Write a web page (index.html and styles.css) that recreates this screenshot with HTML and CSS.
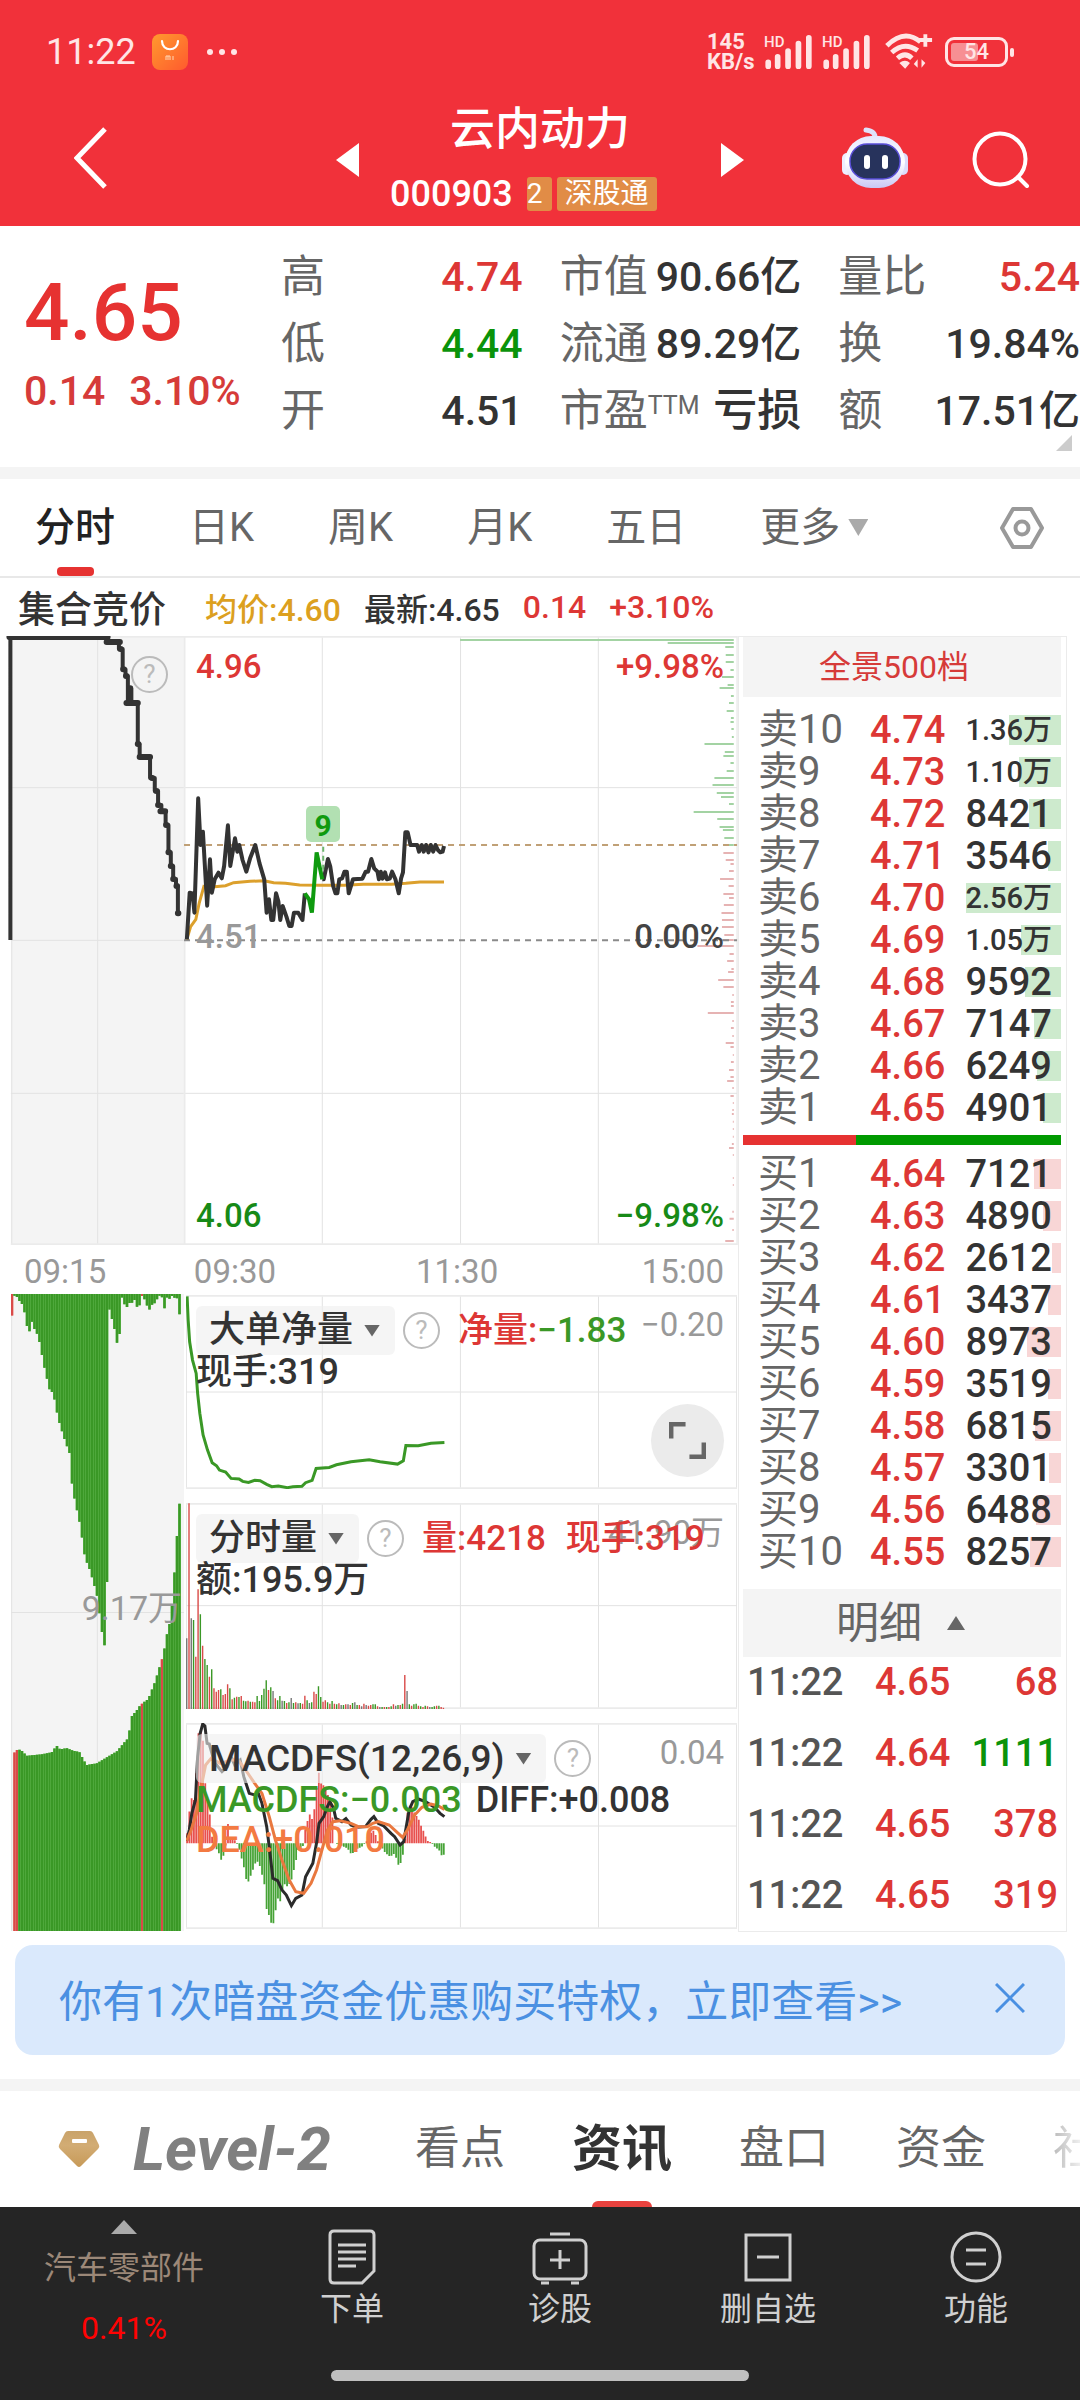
FILE: index.html
```html
<!DOCTYPE html>
<html lang="zh-CN">
<head>
<meta charset="utf-8">
<meta name="viewport" content="width=device-width, initial-scale=1">
<title>云内动力 000903</title>
<link rel="stylesheet" href="styles.css">
</head>
<body>
<header class="top">
  <div class="status">
    <span class="clock">11:22</span>
    <svg class="mi" viewBox="0 0 36 36"><defs><linearGradient id="mi" x1="0" y1="0" x2="1" y2="1"><stop offset="0" stop-color="#ff9a2e"/><stop offset="1" stop-color="#ff5a2e"/></linearGradient></defs><rect width="36" height="36" rx="8" fill="url(#mi)"/><path d="M10 7c0 11 16 11 16 0" fill="none" stroke="#fff" stroke-width="2.2" stroke-linecap="round"/><path d="M14 26v-4h4v4m-2-4v4m5-4v4" fill="none" stroke="#ffd9b8" stroke-width="1"/></svg>
    <svg class="dots" viewBox="0 0 32 8"><circle cx="4" cy="4" r="3"/><circle cx="16" cy="4" r="3"/><circle cx="28" cy="4" r="3"/></svg>
    <span class="speed">145<br>KB/s</span>
    <span class="sim"><span>HD</span><svg viewBox="0 0 52 36"><path d="M4 29v4M14 23v10M25 17v16M36 9v24M47 3v30"/></svg></span>
    <span class="sim"><span>HD</span><svg viewBox="0 0 52 36"><path d="M4 29v4M14 23v10M25 17v16M36 9v24M47 3v30"/></svg></span>
    <svg class="wifi" viewBox="0 0 52 38"><path d="M3 13Q21-5 38 9M8 20Q21 8 35 18M14 26q8-7 15 0" fill="none" stroke-width="5"/><path d="M43 1v13M36 7h14" fill="none" stroke-width="4"/><path d="M16 31q6-5 11 0l-5 6zM35 27v9l-4-4zM39 36v-9l4 4z" stroke="none" fill="#ffe5e5"/></svg>
    <span class="battery"><i></i><b>54</b></span>
  </div>
  <nav class="nav">
    <button class="back" aria-label="返回"><svg viewBox="0 0 34 62"><path d="M31 2 3 31l28 29"/></svg></button>
    <div class="switch">
      <button class="arrow prev" aria-label="上一只"></button>
      <div class="stock">
        <h1>云内动力</h1>
        <p><span class="code">000903</span><span class="tag cut">2</span><span class="tag">深股通</span></p>
      </div>
      <button class="arrow next" aria-label="下一只"></button>
    </div>
    <div class="tools">
      <button aria-label="智能助手"><svg class="robot" viewBox="0 0 68 64"><defs><linearGradient id="rb" x1="0" y1="0" x2="0" y2="1"><stop offset="0" stop-color="#e6e9ff"/><stop offset=".5" stop-color="#fff"/><stop offset="1" stop-color="#c9c8f4"/></linearGradient></defs><path d="M34 12q1-8-9-9" fill="none" stroke="#dfe2fb" stroke-width="5" stroke-linecap="round"/><rect x="1" y="26" width="10" height="22" rx="5" fill="#eef"/><rect x="57" y="26" width="10" height="22" rx="5" fill="#dcdcfa"/><rect x="4" y="9" width="60" height="52" rx="26" fill="url(#rb)"/><rect x="9" y="17" width="50" height="35" rx="17" fill="#27335c" stroke="#5a4fd8" stroke-width="1.5"/><rect x="23" y="28" width="6" height="14" rx="3" fill="#fff"/><rect x="41" y="28" width="6" height="14" rx="3" fill="#fff"/></svg></button>
      <button aria-label="搜索"><svg class="search" viewBox="0 0 58 58"><circle cx="28" cy="28" r="25.5"/><path d="m46 46 9 9"/></svg></button>
    </div>
  </nav>
</header>

<main>
<section class="quote">
  <div class="last">
    <strong>4.65</strong>
    <p><span>0.14</span><span>3.10%</span></p>
  </div>
  <dl class="stats">
    <div><dt>高</dt><dd class="up">4.74</dd></div>
    <div><dt>市值</dt><dd>90.66亿</dd></div>
    <div><dt>量比</dt><dd class="up">5.24</dd></div>
    <div><dt>低</dt><dd class="down">4.44</dd></div>
    <div><dt>流通</dt><dd>89.29亿</dd></div>
    <div><dt>换</dt><dd>19.84%</dd></div>
    <div><dt>开</dt><dd>4.51</dd></div>
    <div><dt>市盈<sup>TTM</sup></dt><dd class="word">亏损</dd></div>
    <div><dt>额</dt><dd>17.51亿</dd></div>
  </dl>
  <i class="corner"></i>
</section>

<nav class="periods">
  <button class="on">分时</button><button>日K</button><button>周K</button><button>月K</button><button>五日</button><button class="more">更多</button>
  <button class="gear" aria-label="设置"><svg viewBox="0 0 44 42"><path d="M13 2h18L42 21 31 40H13L2 21z" stroke-linejoin="round"/><circle cx="22" cy="21" r="6.5"/></svg></button>
</nav>

<div class="summary">
  <strong>集合竞价</strong><span class="avg">均价:4.60</span><span>最新:4.65</span><span class="up">0.14</span><span class="up">+3.10%</span>
</div>

<div class="board">
  <section class="charts">
    <div class="price">
      <svg viewBox="0 48 1564 1827" preserveAspectRatio="none">
        <rect x="23" y="48" width="366" height="1827" fill="#f4f4f4"/>
        <path class="grid" d="M23 48H1562M23 503H1562M23 961H390M23 1420H1562M207 48V1875M683 48V1875M976 48V1875M1268 48V1875M25 48V1875M1562 48V1875"/>
        <path class="grid thick" d="M23 50H1562M391 48V1875M23 1873H1562"/>
        <g id="depth"></g>
        <path d="M390 675H1562" stroke="#c0a076" stroke-width="2" stroke-dasharray="6 5"/>
        <path d="M390 961H1562" stroke="#8a8a8a" stroke-width="2" stroke-dasharray="6 5"/>
        <path class="ink" d="M22 960V51H228V66H252V87H260V148H266V168H271V248H276V205H278V248H292V372H296V410H318V474H328V513H335V555H342V573H351V615H357V697H362V738H367V777H373V798H377V880"/>
        <path class="ink heavy" d="M20 51H228M226 66h28M276 205v43M268 249h24M296 411h22M340 574h10M255 87h1M261 148h1M267 168h1M292 372h1M322 474h1M331 513h1M335 555h1M352 615h1M357 697h1M362 738h1M367 777h1M374 798h1M377 880h1"/>
        <polyline class="avgline" points="396,958 404,920 415,898 422,850 432,800 440,805 455,800 478,797 495,788 530,784 560,782 580,788 605,790 635,795 680,796 730,796 770,793 830,793 860,790 890,786 941,786"/>
        <polyline class="ink" points="396,958 402,818 408,820 412,878 420,535 425,675 430,635 439,857 445,718 449,818 455,778 463,758 470,775 475,738 483,616 488,738 498,655 503,695 507,675 514,720 522,755 530,715 541,675 550,730 560,778 565,878 570,838 575,900 579,900 585,820 590,845 594,900 599,858 607,890 613,918 618,918 623,878 632,878 641,900 646,820"/>
        <polyline class="ink" points="683,778 686,778 695,717 700,740 706,798 711,820 715,820 719,778 725,775 730,755 735,755 739,820 748,778 768,776 775,755 780,755 787,717 793,745 800,755 803,778 807,755 811,776 816,757 820,778 826,776 831,755 838,778 845,820 850,775 854,757 859,637 864,637 870,675 884,675 888,695 894,675 898,695 903,675 908,697 913,675 918,695 923,675 928,690 933,697 938,695 941,678"/>
        <polyline points="646,820 655,838 661,878 671,697 683,778" fill="none" stroke="#0f9a0f" stroke-width="4"/>
        <path d="M685 680V752" stroke="#6db56d" stroke-width="2" stroke-dasharray="5 4"/>
      </svg>
      <button class="help auction" aria-label="说明">?</button>
      <span class="nine">9</span>
      <span class="lab l t up">4.96</span><span class="lab r t up">+9.98%</span>
      <span class="lab l m mute">4.51</span><span class="lab r m">0.00%</span>
      <span class="lab l b down">4.06</span><span class="lab r b down">−9.98%</span>
    </div>
    <div class="axis"><span>09:15</span><span>09:30</span><span>11:30</span><span>15:00</span></div>
    <div class="subs">
      <div class="pre">
        <svg viewBox="33 34 519 1512" preserveAspectRatio="none">
          <path class="grid" d="M33 790H552M292 34V1546M35 34V1546"/>
          <g id="pre-net"></g><g id="pre-vol"></g>
        </svg>
        <span>9.17万</span>
      </div>
      <div class="stack">
        <div class="sub net">
          <svg viewBox="16 44 1516 584" preserveAspectRatio="none">
            <path class="grid" d="M16 336H1532M391 44V628M771 44V628M1151 44V628M17 44V628M1531 44V628"/>
            <path class="grid thick" d="M16 46H1532M16 626H1532"/>
            <polyline fill="none" stroke="#3a9826" stroke-width="3" points="19,48 22,120 26,185 34,240 44,280 48,340 54,400 63,465 75,510 88,549 100,558 108,571 125,577 140,596 162,598 172,605 188,608 205,602 220,603 238,614 252,621 270,619 295,624 310,621 335,620 345,609 363,602 374,566 410,563 430,555 470,546 520,540 550,546 598,553 614,543 621,497 655,498 690,490 727,488"/>
          </svg>
          <div class="legend">
            <button class="chip">大单净量</button><button class="help" aria-label="说明">?</button>
            <span><b class="up">净量:</b><b class="green">−1.83</b></span>
          </div>
          <div class="second"><span>现手:319</span></div>
          <span class="edge">−0.20</span>
          <button class="expand" aria-label="全屏"><svg viewBox="0 0 38 38"><path d="M2 17V2h15M36 21v15H21"/></svg></button>
        </div>
        <div class="sub">
          <svg viewBox="16 -291 1516 618" preserveAspectRatio="none">
            <path class="grid" d="M16 17H1532M391 -291V327M771 -291V327M1151 -291V327M17 -291V327M1531 -291V327"/>
            <path class="grid thick" d="M16 -289H1532M16 325H1532"/>
            <g id="volume"></g>
          </svg>
          <span class="edge">41.90万</span>
          <div class="legend">
            <button class="chip">分时量</button><button class="help" aria-label="说明">?</button>
            <span class="up">量:4218</span><span class="up">现手:319</span>
          </div>
          <div class="second"><span>额:195.9万</span></div>
        </div>
        <div class="sub">
          <svg viewBox="16 369 1516 618" preserveAspectRatio="none">
            <path class="grid" d="M16 678H1532M391 369V987M771 369V987M1151 369V987M17 369V987M1531 369V987"/>
            <path class="grid thick" d="M16 371H1532M16 985H1532"/>
            <g id="macd"></g>
            <polyline fill="none" stroke="#2b2b2b" stroke-width="3" points="18,722 25,690 32,640 42,600 48,470 55,400 62,372 68,378 74,430 80,432 90,470 100,495 115,515 130,500 140,470 150,495 165,480 175,530 190,580 205,585 215,580 225,610 238,680 245,740 255,835 268,842 280,870 292,885 306,917 318,895 335,885 345,830 365,790 375,730 382,670 395,650 405,620 412,605 422,625 428,655 445,665 456,656 470,675 485,682 510,680 525,658 533,650 545,670 560,678 580,700 590,710 605,735 615,725 622,680 630,630 640,605 655,597 675,605 700,622 715,640 727,650"/>
            <polyline fill="none" stroke="#e9783f" stroke-width="3" points="18,722 30,690 45,640 58,560 70,495 85,475 110,490 140,480 160,480 180,510 205,550 225,580 245,650 262,720 280,780 300,840 318,875 340,880 360,850 375,810 390,750 405,690 420,665 440,662 470,670 490,680 515,680 530,670 545,665 575,675 600,700 612,712 625,690 645,645 665,622 690,612 710,618 727,628"/>
          </svg>
          <div class="legend">
            <button class="chip latin">MACDFS(12,26,9)</button><button class="help" aria-label="说明">?</button>
          </div>
          <div class="second"><span class="green">MACDFS:−0.003</span><span>DIFF:+0.008</span><span class="orange">DEA:+0.010</span></div>
          <span class="edge">0.04</span>
        </div>
      </div>
    </div>
  </section>

  <aside class="book">
    <button class="depth-link">全景500档</button>
    <table class="levels sell">
      <tr><th>卖10</th><td>4.74</td><td class="small" style="--w:52px">1.36万</td></tr>
      <tr><th>卖9</th><td>4.73</td><td class="small" style="--w:42px">1.10万</td></tr>
      <tr><th>卖8</th><td>4.72</td><td style="--w:32px">8421</td></tr>
      <tr><th>卖7</th><td>4.71</td><td style="--w:13px">3546</td></tr>
      <tr><th>卖6</th><td>4.70</td><td class="small" style="--w:98px">2.56万</td></tr>
      <tr><th>卖5</th><td>4.69</td><td class="small" style="--w:40px">1.05万</td></tr>
      <tr><th>卖4</th><td>4.68</td><td style="--w:36px">9592</td></tr>
      <tr><th>卖3</th><td>4.67</td><td style="--w:27px">7147</td></tr>
      <tr><th>卖2</th><td>4.66</td><td style="--w:24px">6249</td></tr>
      <tr><th>卖1</th><td>4.65</td><td style="--w:18px">4901</td></tr>
    </table>
    <div class="ratio"><i style="width:35.5%"></i></div>
    <table class="levels buy">
      <tr><th>买1</th><td>4.64</td><td style="--w:27px">7121</td></tr>
      <tr><th>买2</th><td>4.63</td><td style="--w:18px">4890</td></tr>
      <tr><th>买3</th><td>4.62</td><td style="--w:9px">2612</td></tr>
      <tr><th>买4</th><td>4.61</td><td style="--w:13px">3437</td></tr>
      <tr><th>买5</th><td>4.60</td><td style="--w:34px">8973</td></tr>
      <tr><th>买6</th><td>4.59</td><td style="--w:13px">3519</td></tr>
      <tr><th>买7</th><td>4.58</td><td style="--w:26px">6815</td></tr>
      <tr><th>买8</th><td>4.57</td><td style="--w:12px">3301</td></tr>
      <tr><th>买9</th><td>4.56</td><td style="--w:25px">6488</td></tr>
      <tr><th>买10</th><td>4.55</td><td style="--w:31px">8257</td></tr>
    </table>
    <button class="detail">明细</button>
    <table class="ticks">
      <tr><td>11:22</td><td class="up">4.65</td><td class="up">68</td></tr>
      <tr><td>11:22</td><td class="up">4.64</td><td class="down">1111</td></tr>
      <tr><td>11:22</td><td class="up">4.65</td><td class="up">378</td></tr>
      <tr><td>11:22</td><td class="up">4.65</td><td class="up">319</td></tr>
    </table>
  </aside>
</div>

<div class="banner">
  <a href="#">你有1次暗盘资金优惠购买特权，立即查看&gt;&gt;</a>
  <button aria-label="关闭"><svg viewBox="0 0 30 30"><path d="m1 1 28 28M29 1 1 29"/></svg></button>
</div>

<nav class="sections">
  <svg class="gem" viewBox="0 0 42 38"><defs><linearGradient id="gm" x1="0" y1="0" x2="0" y2="1"><stop offset="0" stop-color="#c9a36a"/><stop offset=".4" stop-color="#d2ac74"/><stop offset="1" stop-color="#c79a58"/></linearGradient></defs><path d="M10 1h22q2 0 3 2l6 12q1 2-1 4L23 36q-2 2-4 0L2 19q-2-2-1-4L7 3q1-2 3-2z" fill="url(#gm)"/><rect x="14" y="9" width="15" height="4" rx="1" fill="#fff"/></svg>
  <a class="level" href="#">Level-2</a>
  <a href="#">看点</a><a class="on" href="#">资讯</a><a href="#">盘口</a><a href="#">资金</a><a class="fade" href="#">社</a>
</nav>
</main>

<footer class="dock">
  <div class="bar">
    <button class="industry"><i></i><span>汽车零部件</span><em>0.41%</em></button>
    <button><svg viewBox="0 0 56 56"><path d="M10 2h36q4 0 4 4v36L38 54H10q-4 0-4-4V6q0-4 4-4z"/><path d="M14 16h28M14 23h28M14 30h28M14 37h18"/></svg>下单</button>
    <button><svg viewBox="0 0 56 56"><rect x="2" y="11" width="52" height="39" rx="6"/><path d="M18 5h20M9 54h8M39 54h8M28 21v19M18 31h20"/></svg>诊股</button>
    <button><svg viewBox="0 0 56 56"><rect x="6" y="6" width="44" height="45"/><path d="M17 28h22"/></svg>删自选</button>
    <button><svg viewBox="0 0 56 56"><circle cx="28" cy="28" r="24"/><path d="M18 21h20M18 35h20"/></svg>功能</button>
  </div>
  <i class="home"></i>
</footer>
<script src="charts.js"></script>
</body>
</html>
```

FILE: styles.css
```css
* { box-sizing: border-box; margin: 0; padding: 0; }
body {
  background: #fff;
  color: #333;
  font-family: Roboto, "Noto Sans CJK SC", sans-serif;
  font-weight: 500;
}
button { border: 0; background: none; font: inherit; color: inherit; }
a { color: inherit; text-decoration: none; }
i, em { font-style: normal; }
svg { display: block; }
.up { color: #dd3735; }
.down { color: #0a930a; }
.green { color: #3a9826; }
.orange { color: #f37a42; }

/* header */
.top { background: #f1313a; color: #fff; }
.status { display: flex; align-items: center; height: 103px; padding: 0 62px 0 46px; color: #ffe5e5; }
.clock { font-size: 36px; font-weight: 400; line-height: 40px; }
.mi { width: 36px; height: 36px; margin-left: 16px; }
.dots { width: 32px; height: 8px; margin-left: 18px; fill: #ffe5e5; }
.speed { margin-left: auto; width: 52px; font-size: 22px; font-weight: 700; line-height: 20px; }
.sim { position: relative; margin-left: 5px; }
.sim + .sim { margin-left: 8px; }
.sim span { position: absolute; left: 0; top: 0; font-size: 15px; line-height: 14px; }
.sim svg { width: 50px; height: 34px; }
.sim path { stroke: #ffe5e5; stroke-width: 6; stroke-linecap: round; fill: none; }
.wifi { width: 50px; height: 37px; margin-left: 12px; stroke: #ffe5e5; }
.battery { position: relative; width: 63px; height: 30px; margin-left: 11px; margin-right: 10px; border: 3px solid #ffe5e5; border-radius: 9px; text-align: center; }
.battery i { position: absolute; left: 3px; top: 3px; bottom: 3px; width: 27px; background: #f78f93; border-radius: 3px; }
.battery::after { content: ""; position: absolute; right: -9px; top: 8px; width: 4px; height: 9px; background: #ffe5e5; border-radius: 2px; }
.battery b { position: relative; font-size: 22px; font-weight: 500; line-height: 24px; display: block; }
.nav { display: grid; grid-template-columns: 1fr 408px 1fr; height: 123px; }
.back { justify-self: start; align-self: start; margin: 24px 0 0 74px; }
.back svg { width: 34px; height: 62px; fill: none; stroke: #fff; stroke-width: 5; }
.switch { display: flex; justify-content: space-between; align-items: start; }
.arrow { width: 23px; height: 34px; margin-top: 40px; background: #fff; }
.prev { clip-path: polygon(100% 0, 100% 100%, 0 50%); }
.next { clip-path: polygon(0 0, 100% 50%, 0 100%); }
.stock { width: 300px; text-align: center; }
.stock h1 { font-size: 45px; font-weight: 500; line-height: 54px; }
.stock p { display: flex; align-items: center; height: 74px; gap: 5px; }
.code { font-size: 36px; margin-right: 9px; }
.tag { height: 34px; padding: 0 8px; border-radius: 3px; background: #e18c46; font-size: 28px; font-weight: 400; line-height: 34px; }
.tag.cut { padding: 0 9px 0 0; }
.tools { display: flex; justify-content: flex-end; align-items: start; gap: 63px; padding: 24px 50px 0 0; }
.robot { width: 68px; height: 64px; }
.search { width: 58px; height: 58px; margin-top: 4px; fill: none; stroke: #fff; stroke-width: 4; stroke-linecap: round; }

/* quote */
.quote { position: relative; display: grid; grid-template-columns: 257fr 799fr; height: 253px; padding: 18px 0 0 24px; border-bottom: 12px solid #f4f4f4; }
.last { color: #e63231; }
.last strong { display: block; margin-top: 19px; font-size: 80px; font-weight: 500; line-height: 100px; }
.last p { display: flex; gap: 24px; font-size: 41px; line-height: 56px; color: #d63b39; }
.stats { display: grid; grid-template-columns: 1fr 1fr 1fr; grid-auto-rows: 67px; column-gap: 37px; }
.stats div { display: flex; justify-content: space-between; line-height: 67px; white-space: nowrap; }
.stats dt { font-size: 44px; font-weight: 400; color: #666; }
.stats dd { font-size: 41px; }
.stats .word { font-size: 44px; }
.stats sup { font-size: 25px; line-height: 20px; vertical-align: 12px; }
.corner { position: absolute; right: 8px; bottom: 16px; width: 16px; height: 16px; background: #ccc; clip-path: polygon(100% 0, 100% 100%, 0 100%); }

/* period tabs */
.periods { display: flex; align-items: center; gap: 74px; height: 99px; padding: 0 36px 0 35px; border-bottom: 2px solid #e8e8e8; font-size: 40px; font-weight: 400; line-height: 97px; color: #666; }
.periods button { white-space: nowrap; }
.periods .on { position: relative; font-weight: 500; color: #222; }
.periods .on::after { content: ""; position: absolute; left: 22px; bottom: 0; width: 37px; height: 9px; border-radius: 4px; background: #e63231; }
.more { display: flex; align-items: center; gap: 8px; }
.more::after { content: ""; width: 20px; height: 17px; background: #aaa; clip-path: polygon(0 0, 100% 0, 50% 100%); }
.gear { margin-left: auto; }
.gear svg { width: 44px; height: 42px; fill: none; stroke: #999; stroke-width: 4; }

.summary { display: flex; align-items: center; gap: 23px; height: 58px; padding-left: 18px; font-size: 32px; }
.summary strong { margin-right: 16px; font-size: 37px; font-weight: 500; }
.avg { color: #dca01f; }

/* chart board */
.board { display: grid; grid-template-columns: 738fr 329fr; padding-right: 13px; }
.charts svg { width: 100%; height: 100%; }
.charts svg * { vector-effect: non-scaling-stroke; }
.grid { fill: none; stroke: #e2e2e2; stroke-width: 1; }
.grid.thick { stroke: #ebebeb; stroke-width: 2; }
.ink { fill: none; stroke: #333; stroke-width: 4; stroke-linejoin: round; }
.ink.heavy { stroke-width: 6; stroke-linecap: round; }
.avgline { fill: none; stroke: #dca02c; stroke-width: 3; }
.price { position: relative; height: 609px; }
.lab { position: absolute; font-size: 33px; line-height: 36px; color: #444; }
.lab.up { color: #dd3735; }
.lab.down { color: #178a17; }
.lab.mute { color: #999; }
.l { left: 196px; }
.r { right: 14px; }
.t { top: 13px; }
.m { top: 283px; }
.b { bottom: 11px; }
.help { flex: none; width: 37px; height: 37px; border: 2px solid #bbb; border-radius: 50%; font-size: 26px; line-height: 33px; color: #bbb; font-weight: 400; }
.auction { position: absolute; left: 131px; top: 20px; }
.nine { position: absolute; left: 306px; top: 170px; width: 34px; height: 36px; border-radius: 5px; background: #b2e0b2; color: #0f9a0f; font-size: 30px; font-weight: 700; line-height: 40px; text-align: center; }
.axis { display: grid; grid-template-columns: 173fr 137fr 173fr 230fr; height: 49px; padding: 0 14px 0 24px; font-size: 33px; line-height: 54px; font-weight: 400; color: #999; }
.axis span:nth-child(n+3) { text-align: right; }
.subs { display: grid; grid-template-columns: 173fr 551fr; gap: 2px; padding: 0 1px 0 11px; height: 637px; }
.pre { position: relative; height: 637px; background: #f4f4f4; }
.pre span { position: absolute; right: 2px; top: 292px; font-size: 34px; line-height: 44px; font-weight: 400; color: #999; }
.stack { display: flex; flex-direction: column; gap: 14px; padding-top: 1px; }
.sub { position: relative; height: 206px; }
.sub.net { height: 194px; }
.legend { position: absolute; left: 10px; top: 11px; right: 0; display: flex; align-items: center; height: 49px; font-size: 36px; line-height: 46px; }
.legend span { margin-left: 18px; font-size: 35px; white-space: nowrap; }
.legend span + span { margin-left: 20px; }
.legend b { font-weight: 500; }
.chip { display: flex; align-items: center; gap: 11px; height: 49px; margin-right: 8px; padding: 0 15px 0 13px; border-radius: 6px; background: rgb(238 238 238 / 60%); line-height: 49px; }
.chip::after { content: ""; width: 16px; height: 12px; background: #666; clip-path: polygon(0 0, 100% 0, 50% 100%); }
.chip.latin { font-size: 37px; }
.second { position: absolute; left: 10px; top: 57px; right: 40px; display: flex; flex-wrap: wrap; column-gap: 14px; font-size: 36px; line-height: 40px; }
.edge { position: absolute; right: 13px; top: 12px; font-size: 33px; line-height: 36px; font-weight: 400; color: #999; }
.expand { position: absolute; right: 13px; bottom: 12px; width: 73px; height: 73px; padding: 18px; border-radius: 50%; background: #ebebeb; }
.expand path { fill: none; stroke: #666; stroke-width: 5; }

/* order book */
.book { display: flex; flex-direction: column; padding: 0 5px 0 4px; border: 1px solid #ebebeb; }
.depth-link { height: 60px; background: #f4f4f4; color: #d63b39; font-size: 32px; font-weight: 400; line-height: 60px; padding-right: 16px; }
.levels { width: 100%; margin-top: 12px; border-collapse: collapse; table-layout: fixed; line-height: 42px; }
.levels tr { height: 42px; }
.levels th, .levels td { height: 42px; padding: 0; white-space: nowrap; text-align: left; }
.levels th { width: 127px; padding-left: 15px; font-size: 40px; font-weight: 400; color: #666; }
.levels td { font-size: 38px; color: #dd3735; }
.levels td:last-child { padding-right: 15px; text-align: right; color: #333; background: linear-gradient(var(--bar), var(--bar)) right center / var(--w) 30px no-repeat; }
.levels td.small { font-size: 29px; }
.sell { --bar: #cdeacd; }
.buy { --bar: #f8d6d6; margin-top: 8px; }
.ratio { display: flex; height: 10px; margin-top: 6px; background: #009a00; }
.ratio i { background: #e63231; }
.detail { display: flex; align-items: center; justify-content: center; gap: 25px; height: 68px; margin-top: 16px; padding-right: 3px; background: #f4f4f4; font-size: 43px; font-weight: 400; line-height: 64px; color: #666; }
.detail::after { content: ""; width: 18px; height: 14px; background: #666; clip-path: polygon(50% 0, 100% 100%, 0 100%); }
.ticks { width: 100%; border-collapse: collapse; table-layout: fixed; font-size: 38px; line-height: 50px; }
.ticks td { padding: 0 0 21px; }
.ticks tr:last-child td { padding-bottom: 11px; }
.ticks td:first-child { width: 132px; padding-left: 4px; color: #555; }
.ticks td:last-child { text-align: right; padding-right: 3px; }

/* banner */
.banner { display: flex; align-items: center; justify-content: space-between; height: 110px; margin: 13px 15px 24px; padding: 0 40px 4px 44px; border-radius: 18px; background: #dae9fc; color: #4a90e2; font-size: 43px; font-weight: 400; }
.banner svg { width: 30px; height: 30px; stroke: #4a90e2; stroke-width: 3; }

/* section tabs */
.sections { display: flex; align-items: center; gap: 67px; height: 128px; padding-left: 58px; border-top: 12px solid #f4f4f4; overflow: hidden; font-size: 45px; font-weight: 400; line-height: 116px; white-space: nowrap; color: #666; }
.gem { flex: none; width: 42px; height: 38px; margin-right: -34px; }
.level { flex: none; width: 207px; margin-right: 8px; font-size: 61px; font-style: italic; font-weight: 700; color: #808080; }
.sections .on { position: relative; font-size: 50px; font-weight: 700; color: #333; }
.sections .on::after { content: ""; position: absolute; left: 20px; bottom: 0; width: 60px; height: 6px; border-radius: 6px 6px 0 0; background: #e8423e; }
.fade { background: linear-gradient(90deg, #bbb, #fff 36px); background-clip: text; color: transparent; }

/* dock */
.dock { height: 193px; background: #252525; color: #d0d0d0; }
.bar { display: grid; grid-template-columns: 248fr 208fr 208fr 208fr 208fr; height: 163px; }
.bar button { display: flex; flex-direction: column; align-items: center; padding-top: 22px; font-size: 32px; font-weight: 400; line-height: 48px; }
.bar svg { width: 56px; height: 56px; fill: none; stroke: #d0d0d0; stroke-width: 3; }
.bar .industry { padding-top: 13px; color: #9c8878; }
.industry i { width: 26px; height: 14px; background: #aaa; clip-path: polygon(50% 0, 100% 100%, 0 100%); }
.industry span { margin-top: 10px; }
.industry em { margin-top: 12px; color: #fe0303; }
.home { display: block; width: 418px; max-width: 60%; height: 11px; margin: 0 auto; border-radius: 6px; background: #bfbfbf; }
```

FILE: charts.js
```js
const NS = "http://www.w3.org/2000/svg";
const GREEN = "#3a9826", RED = "#d94a48", GREY = "#777";

// draws one coloured path per colour from a list of segments
function strokes(id, segments, width) {
  const byColour = {};
  segments.forEach(([colour, d]) => { byColour[colour] = (byColour[colour] || "") + d; });
  const host = document.getElementById(id);
  Object.entries(byColour).forEach(([colour, d]) => {
    const path = document.createElementNS(NS, "path");
    path.setAttribute("d", d);
    path.setAttribute("stroke", colour);
    path.setAttribute("stroke-width", width);
    host.appendChild(path);
  });
}

// linear value between key points [x, y, x, y, ...]
function at(keys, x) {
  for (let i = 0; i + 3 < keys.length; i += 2) {
    if (x <= keys[i + 2]) {
      const t = Math.max(0, (x - keys[i]) / (keys[i + 2] - keys[i]));
      return keys[i + 1] + t * (keys[i + 3] - keys[i + 1]);
    }
  }
  return keys[keys.length - 1];
}

const sells = [60,975,69,1415,81,1537,105,1538,126,1538,150,1548,171,1530,195,1542,204,1525,228,1549,249,1545,273,1540,294,1549,306,1548,327,1550,351,1551,372,1493,396,1536,408,1533,429,1548,453,1540,474,1514,495,1510,519,1519,531,1528,552,1545,576,1470,597,1520,621,1525,630,1532,654,1535,675,1543];
const buys = [699,1533,720,1538,732,1548,753,1545,777,1526,798,1544,822,1533,834,1545,855,1534,879,1529,900,1530,921,1530,945,1535,960,1530,978,1478,1002,1546,1023,1541,1047,1550,1056,1543,1080,1522,1101,1533,1125,1552,1146,1549,1158,1549,1179,1500,1203,1552,1224,1549,1248,1552,1269,1538,1281,1548,1305,1553,1326,1549,1350,1545,1371,1548,1383,1541,1404,1552,1428,1548,1449,1553,1470,1552,1482,1551,1505,1553,1527,1553,1550,1553,1572,1551,1584,1545,1605,1553,1674,1553,1695,1553,1775,1552,1796,1546,1830,1552,1863,1537];
const depth = [];
for (let i = 0; i < sells.length; i += 2) depth.push(["#a3d3a3", `M${sells[i + 1]} ${sells[i]}H1555`]);
for (let i = 0; i < buys.length; i += 2) depth.push(["#e6b3b3", `M${buys[i + 1]} ${buys[i]}H1555`]);
strokes("depth", depth, 2);

// call auction: net volume hangs from the top, volume stands on the bottom
const netKeys = [36,85,43,38,50,40,58,50,66,58,72,70,80,108,88,124,96,100,104,118,112,130,120,152,128,188,135,215,150,265,160,268,168,305,180,345,195,382,210,415,217,495,225,525,240,580,255,660,270,690,290,745,300,800,310,860,320,882,325,60,333,85,340,105,348,133,356,178,363,40,370,45,378,76,385,50,393,62,400,45,408,52,415,80,423,36,430,42,438,52,446,76,454,60,462,58,470,48,478,38,485,36,492,74,500,42,508,46,515,38,522,44,530,38,537,82];
const volKeys = [40,1127,47,1118,55,1115,65,1118,80,1130,130,1126,155,1122,170,1106,180,1115,200,1112,220,1118,240,1122,247,1135,260,1152,290,1148,320,1134,350,1120,380,1092,387,1088,391,1040,415,1018,420,1010,445,995,465,955,483,908,490,892,500,845,508,820,515,780,522,712,529,634,537,532];
const net = [], vol = [];
for (let i = 0; i < 68; i++) {
  const x = 36 + i * 7.5;
  net.push([i < 1 || i === 52 ? RED : GREEN, `M${x} 34V${at(netKeys, x)}`]);
  if (i) vol.push([i < 3 || i === 52 || i === 60 ? RED : GREEN, `M${x} 1546V${at(volKeys, x)}`]);
}
[["pre-net", net], ["pre-vol", vol]].forEach(([id, bars]) => {
  strokes(id, bars.map(([c, d]) => [c === GREEN ? "#62b850" : "#e88078", d]), 3);
  strokes(id, bars, 2);
});

// minute volume
const heights = [212,617,272,267,157,359,284,190,150,132,97,119,62,52,57,59,42,45,74,62,29,34,37,36,39,25,23,25,22,22,20,39,24,42,61,86,57,65,54,32,26,39,25,24,18,20,33,18,20,17,18,16,40,26,18,20,52,45,68,36,22,26,20,16,24,16,14,17,12,12,14,14,12,18,20,12,12,8,16,12,10,12,14,14,8,6,6,6,6,6,8,14,10,12,12,16,102,54,14,10,14,16,10,8,6,10,8,6,6,8,10,10,6,4];
const tones = "krkgrrgrggrgrrrgrrrgrgrgrggrgrrgggggrgkrggkgrgkgrkgrrgkgrrggrrgrgrgrkgrkrgkgrkrkrrggrkgrgrgrkgrgrkgrggrgrgrkggrgrr";
const colours = { r: RED, g: GREEN, k: GREY };
strokes("volume", heights.map((h, i) => [colours[tones[i]], `M${18 + i * 6.25} 327V${327 - h}`]), 1.4);

// MACD histogram around the zero line
const macdKeys = [20,700,26,625,32,592,38,600,44,520,50,400,56,398,62,405,68,540,74,600,80,625,86,700,92,735,105,755,113,780,120,765,126,732,131,668,137,715,150,720,160,738,175,800,182,840,188,845,200,810,210,780,220,800,232,855,238,930,246,950,254,985,262,935,270,890,275,905,285,850,295,860,305,845,315,800,325,750,338,738,344,690,352,655,358,640,365,665,372,600,380,510,387,550,400,560,405,580,412,605,418,640,425,730,440,735,460,745,472,765,480,750,500,740,520,715,528,690,535,695,542,720,550,735,565,760,578,770,590,760,602,800,610,780,618,735,622,660,628,620,635,615,645,640,655,655,662,675,670,695,680,722,690,727,700,740,712,750,720,768,728,762];
const macd = [];
for (let x = 19; x < 730; x += 6.25) {
  const y = at(macdKeys, x);
  macd.push([y < 730 ? "#e8504e" : "#46a336", `M${x} 730V${y}`]);
}
strokes("macd", macd, 1.8);
```
